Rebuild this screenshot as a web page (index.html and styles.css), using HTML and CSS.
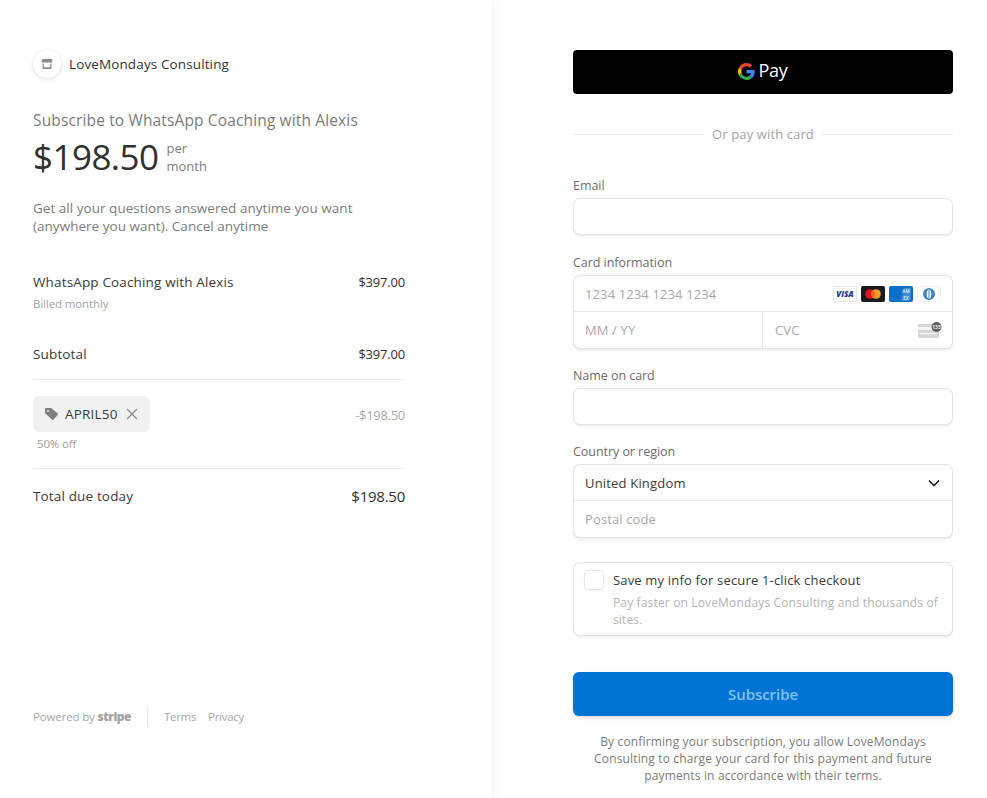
FILE: index.html
```html
<!DOCTYPE html>
<html lang="en">
<head>
<meta charset="utf-8">
<title>Subscribe to WhatsApp Coaching with Alexis</title>
<link rel="stylesheet" href="styles.css">
</head>
<body>
<div class="page">
  <aside class="summary">
    <div class="summary-main">
      <header class="merchant">
        <span class="merchant-logo">
          <svg width="12" height="12" viewBox="0 0 12 12"><path d="M1.6 1h8.8a.6.6 0 0 1 .6.5l.5 2.3c0 .4-.3.7-.7.7H1.2c-.4 0-.7-.3-.7-.7l.5-2.3a.6.6 0 0 1 .6-.5z" fill="#8d8d8d"/><path d="M1.5 5.500h1.200v3.700h6.600V5.500h1.200V11h-9z" fill="#8d8d8d"/></svg>
        </span>
        <span class="merchant-name">LoveMondays Consulting</span>
      </header>
      <h1 class="product-title">Subscribe to WhatsApp Coaching with Alexis</h1>
      <div class="price-row">
        <span class="price">$198.50</span>
        <span class="period">per<br>month</span>
      </div>
      <p class="description">Get all your questions answered anytime you want (anywhere you want). Cancel anytime</p>
      <div class="line-item">
        <div>
          <div class="row-label">WhatsApp Coaching with Alexis</div>
          <div class="row-sub">Billed monthly</div>
        </div>
        <div class="row-amount">$397.00</div>
      </div>
      <div class="subtotal">
        <span class="row-label">Subtotal</span>
        <span class="row-amount">$397.00</span>
      </div>
      <div class="discount">
        <div>
          <div class="promo">
            <svg width="13" height="12" viewBox="0 0 13 12"><path d="M0 1.2C0 .5.5 0 1.2 0h4.300c.3 0 .6.1.9.3l6.200 5c.5.5.5 1.200 0 1.700l-4 4.500c-.5.500-1.200.500-1.700 0L.4 5.400C.1 5.100 0 4.800 0 4.500z" fill="#7f7f7f"/><circle cx="3" cy="3" r="1" fill="#f1f1f1"/></svg>
            <span class="promo-code">APRIL50</span>
            <svg width="12" height="12" viewBox="0 0 12 12"><path d="M1 1l10 10M11 1L1 11" stroke="#8a8a8a" stroke-width="1.300" fill="none"/></svg>
          </div>
          <div class="promo-note">50% off</div>
        </div>
        <div class="discount-amount">-$198.50</div>
      </div>
      <div class="total">
        <span class="row-label">Total due today</span>
        <span class="total-amount">$198.50</span>
      </div>
    </div>
    <footer class="legal">
      <span class="powered">Powered by <b class="stripe">stripe</b></span>
      <span class="legal-rule"></span>
      <span class="legal-link">Terms</span>
      <span class="legal-link">Privacy</span>
    </footer>
  </aside>

  <main class="checkout">
    <div class="gpay">
      <svg width="17" height="17" viewBox="0 0 48 48"><path fill="#EA4335" d="M24 9.500c3.500 0 6.700 1.200 9.200 3.600l6.900-6.900C35.900 2.400 30.500 0 24 0 14.600 0 6.500 5.400 2.600 13.200l8 6.200C12.400 13.700 17.700 9.500 24 9.500z"/><path fill="#4285F4" d="M47 24.500c0-1.600-.1-3.100-.4-4.500H24v9h12.900c-.6 3-2.200 5.500-4.700 7.200l7.700 6C44.400 38.400 47 32 47 24.500z"/><path fill="#FBBC05" d="M10.500 28.600c-.5-1.400-.8-3-.8-4.600s.3-3.200.8-4.600l-8-6.200C.9 16.500 0 20.100 0 24s.9 7.500 2.600 10.800l7.900-6.200z"/><path fill="#34A853" d="M24 48c6.500 0 11.900-2.100 15.900-5.800l-7.700-6c-2.200 1.500-4.900 2.300-8.200 2.300-6.300 0-11.600-4.200-13.500-9.900l-8 6.200C6.500 42.600 14.600 48 24 48z"/></svg>
      <span class="gpay-text">Pay</span>
    </div>
    <div class="divider"><span class="divider-text">Or pay with card</span></div>

    <label class="field-label field-first">Email</label>
    <div class="box input-row"></div>

    <label class="field-label field-card">Card information</label>
    <div class="box">
      <div class="input-row split-bottom card-number">
        <span class="placeholder">1234 1234 1234 1234</span>
        <span class="brands">
          <svg class="brand" width="24" height="16" viewBox="0 0 24 16"><rect x=".5" y=".5" width="23" height="15" rx="1.500" fill="#fff" stroke="#e8e8e8"/><text x="12" y="11.300" text-anchor="middle" class="visa-text">VISA</text></svg>
          <svg class="brand" width="24" height="16" viewBox="0 0 24 16"><rect width="24" height="16" rx="2" fill="#1c1a17"/><circle cx="9" cy="8" r="4.800" fill="#e3102a"/><circle cx="15" cy="8" r="4.800" fill="#f39a1f"/><path d="M12 4.200a4.800 4.800 0 0 1 0 7.600 4.800 4.800 0 0 1 0-7.600z" fill="#f2631c"/></svg>
          <svg class="brand" width="24" height="16" viewBox="0 0 24 16"><rect width="24" height="16" rx="2" fill="#0f6fc6"/><path d="M12 15l3-13h7v11l-3 2z" fill="#3c8ad3"/><text x="17" y="7" text-anchor="middle" class="amex-text">AM</text><text x="17" y="13.500" text-anchor="middle" class="amex-text">EX</text></svg>
          <svg class="brand" width="24" height="16" viewBox="0 0 24 16"><rect x=".5" y=".5" width="23" height="15" rx="1.500" fill="#fff" stroke="#f0f0f0"/><circle cx="12" cy="8" r="6" fill="#3f86c2"/><ellipse cx="12" cy="8" rx="2.300" ry="4.600" fill="#fff"/><rect x="11.500" y="3.800" width="1" height="8.400" fill="#3f86c2"/></svg>
        </span>
      </div>
      <div class="card-split">
        <div class="input-row expiry"><span class="placeholder">MM / YY</span></div>
        <div class="input-row cvc">
          <span class="placeholder">CVC</span>
          <svg class="cvc-icon" width="24" height="16" viewBox="0 0 24 16"><rect y="2" width="21" height="14" rx="1" fill="#d7d7d7"/><rect y="5" width="21" height="3" fill="#f4f4f4"/><rect x="1.500" y="11" width="16" height="1.200" fill="#fafafa"/><circle cx="18.500" cy="5" r="5" fill="#5f5f5f"/><text x="18.500" y="7" text-anchor="middle" class="cvc-text">135</text></svg>
        </div>
      </div>
    </div>

    <label class="field-label">Name on card</label>
    <div class="box input-row"></div>

    <label class="field-label">Country or region</label>
    <div class="box">
      <div class="input-row split-bottom country">
        <span class="value">United Kingdom</span>
        <svg width="12" height="8" viewBox="0 0 12 8"><path d="M1 1.500l5 5 5-5" fill="none" stroke="#1f1f1f" stroke-width="1.600"/></svg>
      </div>
      <div class="input-row"><span class="placeholder">Postal code</span></div>
    </div>

    <div class="box save-card">
      <span class="checkbox"></span>
      <div>
        <div class="save-title">Save my info for secure 1-click checkout</div>
        <div class="save-sub">Pay faster on LoveMondays Consulting and thousands of sites.</div>
      </div>
    </div>

    <div class="subscribe">Subscribe</div>
    <p class="terms">By confirming your subscription, you allow LoveMondays Consulting to charge your card for this payment and future payments in accordance with their terms.</p>
  </main>
</div>
</body>
</html>
```
FILE: styles.css
```css
* { box-sizing: border-box; }
html, body { margin: 0; height: 100%; background: #fff; }
body {
  font-family: "Open Sans", "Noto Sans", sans-serif;
  font-size: 13px;
  color: #303030;
  overflow: hidden;
}
.page {
  display: grid;
  grid-template-columns: 492px 1fr;
  height: 798px;
  overflow: hidden;
}
.summary {
  display: flex;
  flex-direction: column;
  justify-content: space-between;
  padding: 50px 87px 73px 33px;
  box-shadow: 2px 0 8px rgba(0,0,0,.05);
  position: relative;
}
.merchant { display: flex; align-items: center; height: 28px; gap: 8px; }
.merchant-logo {
  width: 28px; height: 28px; border-radius: 50%;
  display: flex; align-items: center; justify-content: center;
  background: #fff;
  box-shadow: 0 1px 4px rgba(0,0,0,.14);
}
.merchant-name { font-size: 13.500px; font-weight: 500; letter-spacing: .12px; color: #333; }
.product-title {
  margin: 32px 0 0;
  font-size: 15.500px; line-height: 20px; font-weight: 500; color: #7b7b7b;
  letter-spacing: .14px;
}
.price-row { display: flex; align-items: center; margin-top: 7px; height: 40px; gap: 8px; }
.price { font-size: 35px; line-height: 40px; font-weight: 500; color: #303030; letter-spacing: -.55px; }
.period { font-size: 13px; line-height: 18px; color: #808080; }
.description { margin: 22px 0 0; font-size: 13.500px; line-height: 18px; color: #7c7c7c; font-weight: 500; letter-spacing: .03px; width: 340px; }
.line-item { display: flex; justify-content: space-between; margin-top: 38px; height: 46px; }
.row-label { font-size: 13.500px; line-height: 18px; font-weight: 500; color: #3a3a3a; letter-spacing: .15px; }
.row-amount { font-size: 13px; line-height: 18px; font-weight: 500; color: #303030; letter-spacing: -.2px; }
.row-sub { font-size: 11.500px; line-height: 16px; margin-top: 5px; color: #a3a3a3; letter-spacing: -.12px; }
.subtotal { display: flex; justify-content: space-between; margin-top: 26px; padding-bottom: 16px; border-bottom: 1px solid #ececec; }
.discount { display: flex; justify-content: space-between; padding-top: 16px; height: 89px; border-bottom: 1px solid #ececec; }
.promo {
  display: flex; align-items: center; width: 117px; height: 36px; border-radius: 6px;
  background: #f1f1f1; padding-left: 12px;
}
.promo-code { margin: 0 8px 0 7px; font-size: 13.500px; font-weight: 500; color: #3d3d3d; letter-spacing: .2px; white-space: nowrap; }
.promo-note { margin: 4px 0 0 4px; font-size: 11.500px; line-height: 16px; color: #a0a0a0; letter-spacing: -.15px; }
.discount-amount { margin-top: 10px; font-size: 13px; line-height: 18px; color: #a8a8a8; letter-spacing: -.3px; }
.total { display: flex; justify-content: space-between; align-items: center; margin-top: 17px; }
.total-amount { font-size: 15px; line-height: 20px; font-weight: 500; color: #303030; letter-spacing: -.25px; }
.legal { display: flex; align-items: center; height: 18px; font-size: 11.500px; color: #a8a8a8; }
.powered { letter-spacing: -.15px; }
.stripe { font-family: "Open Sans", sans-serif; font-weight: 800; font-size: 12px; color: #a3a3a3; letter-spacing: -.5px; }
.legal-rule { width: 1px; height: 17px; background: #e6e6e6; margin: 0 16px; }
.legal-link { margin-right: 12px; letter-spacing: -.3px; }

.checkout { padding: 50px 34px 0 81px; width: 495px; }
.gpay {
  display: flex; align-items: center; justify-content: center; gap: 3px;
  height: 44px; background: #000; border-radius: 4px;
}
.gpay-text { margin-top: -5px; font-family: "Open Sans", sans-serif; font-size: 18px; line-height: 22px; color: #fff; letter-spacing: -.2px; }
.gpay svg { margin-top: -1px; }
.divider { display: flex; align-items: center; gap: 8px; margin-top: 30px; height: 20px; }
.divider::before, .divider::after { content: ""; flex: 1; height: 1px; background: #ebebeb; }
.divider-text { font-size: 13px; color: #a3a3a3; letter-spacing: .12px; }
.field-label { display: block; margin: 19px 0 4px; font-size: 12.500px; line-height: 18px; font-weight: 500; color: #6d6d6d; letter-spacing: -.05px; }
.field-first { margin-top: 33px; }
.field-card { margin-top: 20px; }
.box {
  border-radius: 6px;
  background: #fff;
  box-shadow: 0 0 0 1px #e4e4e4, 0 2px 3px rgba(0,0,0,.1);
  margin: 0 1px;
}
.box.input-row { height: 35px; }
.input-row { display: flex; align-items: center; justify-content: space-between; height: 36px; padding: 0 12px 0 11px; }
.split-bottom { border-bottom: 1px solid #e6e6e6; }
.placeholder { font-size: 13px; color: #a8a8a8; letter-spacing: .12px; }
.value { font-size: 13px; color: #3a3a3a; letter-spacing: .18px; }
.brands { display: flex; gap: 4px; margin-right: -1px; }
.brand { display: block; }
.visa-text { font-family: "Open Sans", sans-serif; font-size: 8px; font-weight: 800; font-style: italic; fill: #1a3f8f; }
.amex-text { font-family: "Open Sans", sans-serif; font-size: 4.500px; font-weight: 700; fill: #d5e7f7; }
.cvc-text { font-family: "Open Sans", sans-serif; font-size: 5px; font-weight: 700; fill: #eee; }
.card-split { display: grid; grid-template-columns: 189px 1fr; }
.expiry { border-right: 1px solid #e6e6e6; }
.cvc { padding-left: 12px; }
.cvc-icon { margin-right: -2px; }
.save-card { display: flex; gap: 10px; margin-top: 26px; padding: 8px 11px; height: 72px; }
.checkbox { flex: none; width: 18px; height: 18px; border-radius: 4px; box-shadow: 0 0 0 1px #e6e6e6, 0 1px 3px rgba(0,0,0,.12); background: #fff; }
.save-title { font-size: 13px; line-height: 18px; color: #3a3a3a; letter-spacing: .17px; }
.save-sub { margin-top: 5px; font-size: 12px; line-height: 17px; color: #b4b4b4; letter-spacing: .15px; }
.subscribe {
  display: flex; align-items: center; justify-content: center;
  margin-top: 37px; height: 44px; border-radius: 6px;
  background: #0074d4;
  box-shadow: 0 2px 4px rgba(0,0,0,.14);
  font-size: 15px; font-weight: 600; color: #84c1f3; letter-spacing: -.05px;
}
.terms { margin: 17px 20px 0; text-align: center; font-size: 12px; line-height: 17px; color: #7c7c7c; letter-spacing: .15px; }
```
